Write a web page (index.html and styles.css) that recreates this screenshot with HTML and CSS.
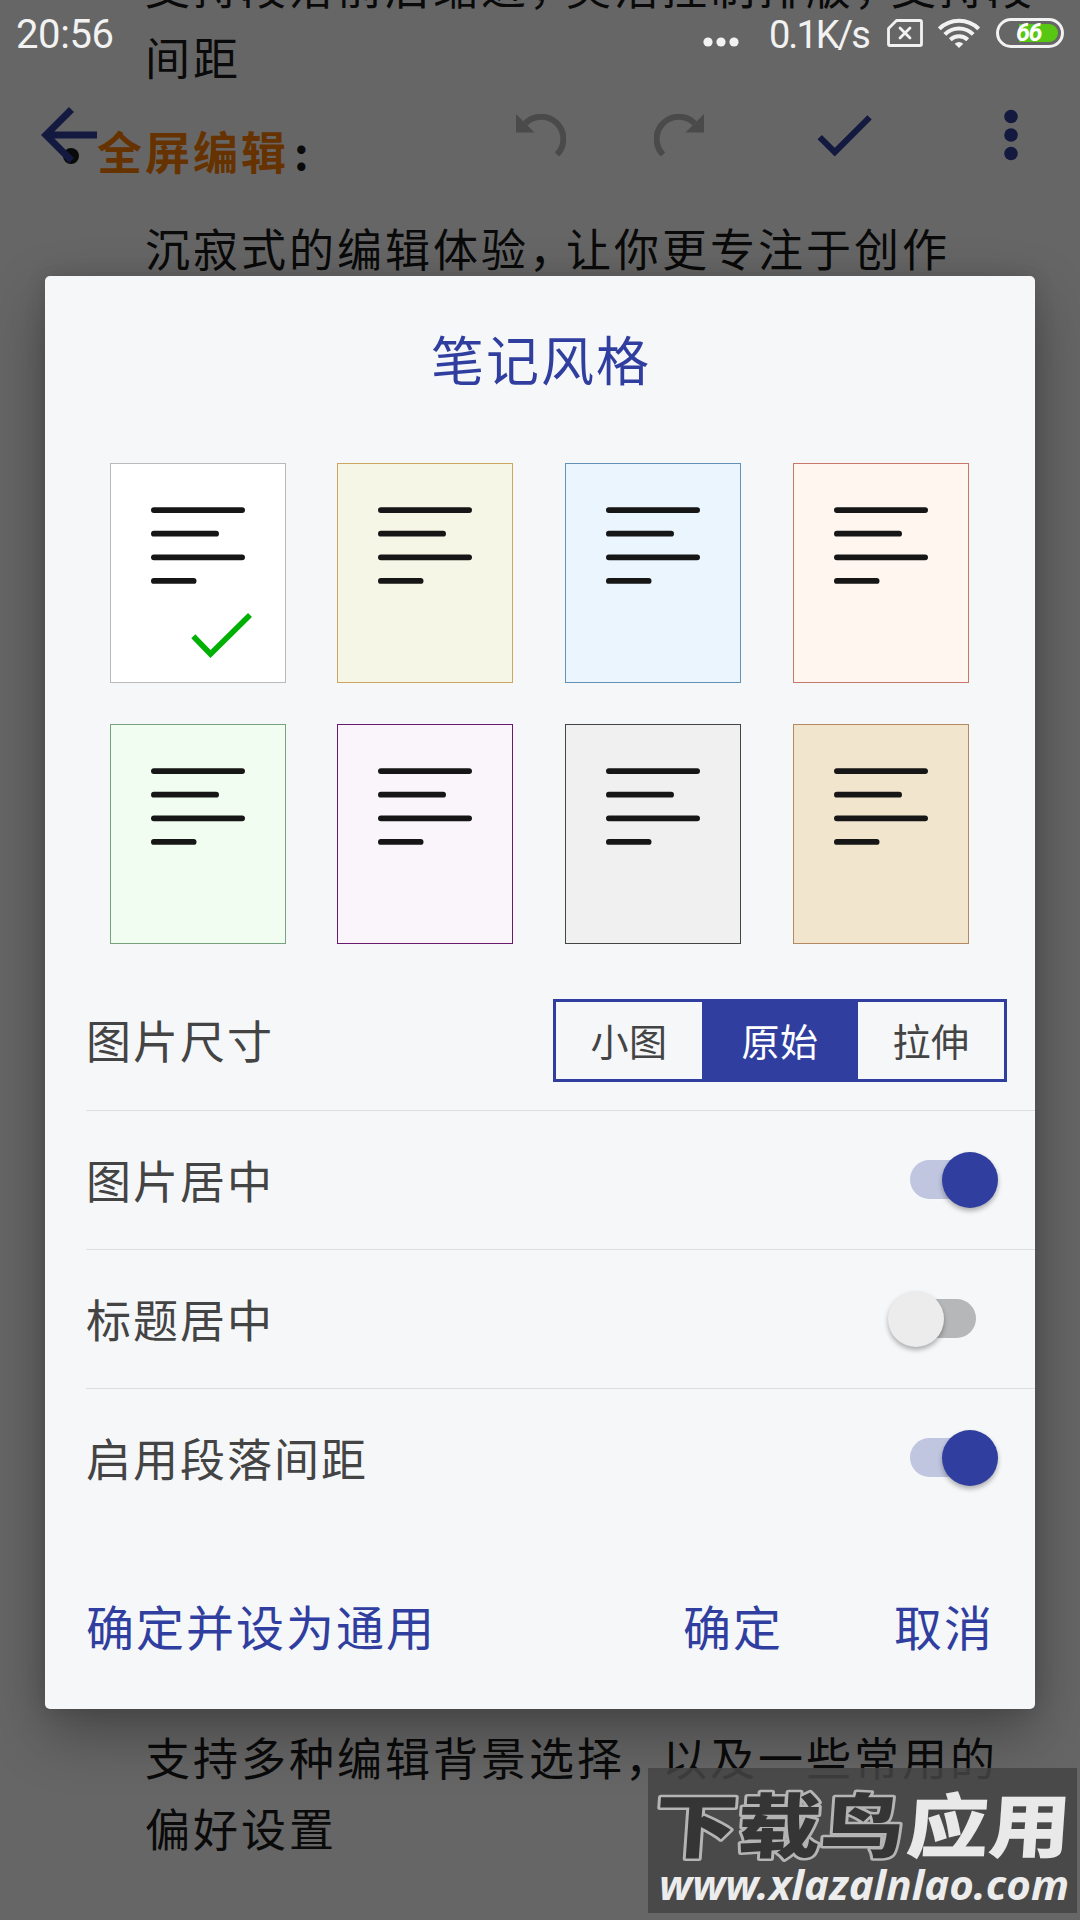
FILE: index.html
```html
<!DOCTYPE html>
<html lang="zh-CN">
<head>
    <meta charset="UTF-8">
    <meta name="viewport" content="width=device-width, initial-scale=1.0">
    <title>笔记风格</title>
    <link rel="stylesheet" href="styles.css">
</head>
<body>
    <svg class="defs" width="0" height="0">
        <symbol id="lines" viewBox="0 0 94 78">
            <g fill="#161616">
                <rect x="0" y="0.2" width="94" height="5.8" rx="2.9"/>
                <rect x="0" y="23.8" width="68" height="5.8" rx="2.9"/>
                <rect x="0" y="47.4" width="94" height="5.8" rx="2.9"/>
                <rect x="0" y="71" width="45.5" height="5.8" rx="2.9"/>
            </g>
        </symbol>
    </svg>

    <div class="screen">
        <!-- Note content -->
        <main class="note">
            <p>支持段落前后缩进<span class="comma">，</span>灵活控制排版<span class="comma">，</span>支持段<br>间距</p>
            <h2><span class="bullet"></span><span class="accent">全屏编辑</span><span class="colon">:</span></h2>
            <p>沉寂式的编辑体验<span class="comma">，</span>让你更专注于创作</p>
            <p class="last">支持多种编辑背景选择<span class="comma">，</span>以及一些常用的<br>偏好设置</p>
        </main>

        <header class="toolbar">
            <svg class="back" width="84" height="84" viewBox="0 0 24 24"><path fill="#303f9f" d="M20 11H7.83l5.59-5.59L12 4l-8 8 8 8 1.41-1.41L7.83 13H20v-2z"/></svg>
            <svg class="undo" width="50" height="43" viewBox="0 0 50 43"><path d="M9.4 9.4A22 22 0 0 1 41 40.5" fill="none" stroke="#b9b9b9" stroke-width="6"/><path d="M0 0v18.5h18.5z" fill="#b9b9b9"/></svg>
            <svg class="redo" width="50" height="43" viewBox="0 0 50 43"><path d="M40.6 9.4A22 22 0 0 0 9 40.5" fill="none" stroke="#b9b9b9" stroke-width="6"/><path d="M50 0v18.5H31.5z" fill="#b9b9b9"/></svg>
            <svg class="done" width="74" height="74" viewBox="0 0 24 24"><path fill="#303f9f" d="M9 16.17L4.83 12l-1.42 1.41L9 19 21 7l-1.41-1.41z"/></svg>
            <svg class="more" width="14" height="52" viewBox="0 0 14 52"><g fill="#303f9f"><circle cx="7" cy="7.5" r="6.8"/><circle cx="7" cy="26" r="6.8"/><circle cx="7" cy="44.5" r="6.8"/></g></svg>
        </header>

        <div class="scrim"></div>

        <div class="statusbar">
            <span class="time">20:56</span>
            <svg class="dots" width="36" height="30" viewBox="0 0 36 30"><g fill="#f2f2f2"><circle cx="5" cy="24" r="4.6"/><circle cx="18" cy="24" r="4.6"/><circle cx="31" cy="24" r="4.6"/></g></svg>
            <span class="speed">0.1K/s</span>
            <svg class="sim" width="36" height="30" viewBox="0 0 36 30"><path d="M9.5 2.5H33q1.500 0 1.500 1.500v22q0 1.500-1.500 1.500H3q-1.500 0-1.500-1.500V10.500z" fill="none" stroke="#f2f2f2" stroke-width="2.8" stroke-linejoin="round"/><path d="M13 10l10 10M23 10l-10 10" stroke="#f2f2f2" stroke-width="2.8" stroke-linecap="round"/></svg>
            <svg class="wifi" width="42" height="30" viewBox="0 0 42 30"><g fill="none" stroke="#f2f2f2" stroke-width="4"><path d="M1.3 10.8a28 28 0 0 1 39.4 0"/><path d="M6.800 16.400a20 20 0 0 1 28.400 0"/><path d="M12.300 21.800a12.500 12.500 0 0 1 17.400 0"/></g><path d="M21 30l-4.300-4.200q4.300-3.400 8.600 0z" fill="#f2f2f2"/></svg>
            <div class="battery"><div class="level"></div><b>66</b></div>
        </div>

        <!-- Style dialog -->
        <section class="dialog">
            <h1>笔记风格</h1>

            <div class="papers">
                <div class="paper white">
                    <svg width="94" height="78"><use href="#lines"/></svg>
                    <svg class="tick" width="62" height="46" viewBox="0 0 62 46"><path d="M2.300 23.300L19.500 41 59 2" fill="none" stroke="#00b104" stroke-width="5.600"/></svg>
                </div>
                <div class="paper yellow"><svg width="94" height="78"><use href="#lines"/></svg></div>
                <div class="paper blue"><svg width="94" height="78"><use href="#lines"/></svg></div>
                <div class="paper pink"><svg width="94" height="78"><use href="#lines"/></svg></div>
                <div class="paper green"><svg width="94" height="78"><use href="#lines"/></svg></div>
                <div class="paper purple"><svg width="94" height="78"><use href="#lines"/></svg></div>
                <div class="paper gray"><svg width="94" height="78"><use href="#lines"/></svg></div>
                <div class="paper kraft"><svg width="94" height="78"><use href="#lines"/></svg></div>
            </div>

            <div class="settings">
                <div class="row">
                    <span>图片尺寸</span>
                    <div class="segmented">
                        <button>小图</button>
                        <button class="active">原始</button>
                        <button>拉伸</button>
                    </div>
                </div>
                <div class="row">
                    <span>图片居中</span>
                    <div class="switch on"></div>
                </div>
                <div class="row">
                    <span>标题居中</span>
                    <div class="switch"></div>
                </div>
                <div class="row">
                    <span>启用段落间距</span>
                    <div class="switch on"></div>
                </div>
            </div>

            <footer class="actions">
                <button class="default">确定并设为通用</button>
                <button>确定</button>
                <button>取消</button>
            </footer>
        </section>

        <div class="watermark">
            <svg width="429" height="145" viewBox="0 0 429 145">
                <g transform="skewX(-4)">
                    <text class="wm-dark" x="11" y="84" textLength="249" lengthAdjust="spacingAndGlyphs">下载鸟</text>
                    <text class="wm-light" x="263" y="84" textLength="164" lengthAdjust="spacingAndGlyphs">应用</text>
                </g>
                <text class="wm-url" x="11" y="132" textLength="410" lengthAdjust="spacingAndGlyphs">www.xlazalnlao.com</text>
            </svg>
        </div>
    </div>
</body>
</html>
```
FILE: styles.css
```css
* {
    box-sizing: border-box;
}
body {
    margin: 0;
    font-family: "Noto Sans CJK SC", sans-serif;
}
.defs {
    position: absolute;
}
.screen {
    position: relative;
    width: 1080px;
    height: 1920px;
    overflow: hidden;
    background: #fff;
}

/* note */
.note {
    height: 1920px;
    padding-left: 145px;
    margin-top: -50px;
    font-size: 45px;
    letter-spacing: 3px;
    line-height: 71px;
    color: #1a1a1a;
    white-space: nowrap;
}
.note p {
    margin: 0;
}
.note h2 {
    display: flex;
    align-items: center;
    margin: 23px 0 26px -82px;
    font-size: 45px;
    line-height: 71px;
}
.note .last {
    margin-top: 1438px;
}
.comma {
    letter-spacing: -8px;
}
.bullet {
    width: 16px;
    height: 16px;
    margin: 10px 18px 0 0;
    border-radius: 50%;
    background: #1a1a1a;
}
.accent {
    color: #ff8000;
}
.colon {
    margin-left: 5px;
}

/* toolbar */
.toolbar {
    position: absolute;
    top: 85px;
    left: 0;
    width: 1080px;
    height: 100px;
    display: flex;
    align-items: center;
    padding-left: 27px;
}
.undo {
    margin-left: 405px;
}
.redo {
    margin-left: 88px;
}
.done {
    margin-left: 103px;
}
.more {
    margin-left: 123px;
}

.scrim {
    position: absolute;
    inset: 0;
    background: rgba(0, 0, 0, 0.6);
}

/* status bar */
.statusbar {
    position: absolute;
    top: 0;
    left: 0;
    width: 1080px;
    height: 66px;
    display: flex;
    align-items: center;
    padding: 0 16px;
    font-family: Roboto, sans-serif;
    font-size: 38px;
    color: #f2f2f2;
}
.time {
    width: 687px;
    margin-top: 3px;
    font-size: 40px;
    letter-spacing: -0.4px;
}
.speed {
    width: 114px;
    margin: 3px 0 0 30px;
    letter-spacing: -2px;
}
.sim {
    margin-left: 4px;
}
.wifi {
    margin-left: 15px;
}
.battery {
    position: relative;
    width: 68px;
    height: 30px;
    margin-left: 16px;
    border: 3px solid #f2f2f2;
    border-radius: 16px;
}
.battery .level {
    width: 39px;
    height: 18px;
    margin: 3px 0 0 20px;
    border-radius: 0 9px 9px 0;
    background: #57c714;
}
.battery b {
    position: absolute;
    top: -2px;
    left: 17px;
    font-size: 25px;
    line-height: 28px;
    font-style: italic;
    letter-spacing: -1.5px;
    color: #fff;
}

/* dialog */
.dialog {
    position: absolute;
    top: 276px;
    left: 45px;
    width: 990px;
    height: 1433px;
    border-radius: 5px;
    background: #f6f7f9;
    box-shadow: 0 24px 60px rgba(0, 0, 0, 0.32), 0 0 20px rgba(0, 0, 0, 0.12);
}
.dialog h1 {
    margin: 0;
    height: 187px;
    padding: 42px 0 0 2px;
    font-size: 53px;
    font-weight: 400;
    line-height: 80px;
    letter-spacing: 2px;
    text-align: center;
    color: #303f9f;
}
.papers {
    display: grid;
    grid-template-columns: 227px 228px 228px 176px;
    row-gap: 41px;
    margin-left: 65px;
}
.paper {
    position: relative;
    width: 176px;
    height: 220px;
    padding: 43px 0 0 40px;
    border: 1px solid;
}
.paper svg {
    display: block;
}
.paper .tick {
    position: absolute;
    top: 149px;
    left: 80px;
}
.white {
    background: #fff;
    border-color: #bababa;
}
.yellow {
    background: #f6f6e6;
    border-color: #cda75f;
}
.blue {
    background: #eaf5fd;
    border-color: #6492b7;
}
.pink {
    background: #fff6f0;
    border-color: #c7786b;
}
.green {
    background: #f1fdf1;
    border-color: #76a27e;
}
.purple {
    background: #faf5fb;
    border-color: #6a1a6e;
}
.gray {
    background: #f0f0f0;
    border-color: #444;
}
.kraft {
    background: #f1e5ce;
    border-color: #b58a62;
}

.settings {
    margin: 27px 0 0 41px;
}
.row {
    display: flex;
    align-items: center;
    justify-content: space-between;
    height: 139px;
    font-size: 45px;
    letter-spacing: 2px;
    color: #444;
}
.row + .row {
    border-top: 1px solid #dcdee0;
}
.row span {
    margin-top: -2px;
}
button {
    padding: 0;
    border: none;
    background: none;
    font-family: inherit;
    cursor: pointer;
}
.segmented {
    display: flex;
    width: 454px;
    height: 83px;
    margin-right: 28px;
    border: 3px solid #303f9f;
}
.segmented button {
    flex: 0 0 146px;
    padding-bottom: 2px;
    font-size: 38px;
    letter-spacing: 0.5px;
    color: #444;
}
.segmented .active {
    flex: 1;
    background: #303f9f;
    color: #fff;
}
.switch {
    position: relative;
    width: 66px;
    height: 39px;
    margin: 0 59px 2px 0;
    border-radius: 20px;
    background: #b5b7b9;
}
.switch::after {
    content: "";
    position: absolute;
    top: -8px;
    left: -22px;
    width: 56px;
    height: 56px;
    border-radius: 50%;
    background: #ececec;
    box-shadow: 0 3px 5px rgba(0, 0, 0, 0.3);
}
.switch.on {
    background: #c0c6e0;
}
.switch.on::after {
    left: 32px;
    background: #303f9f;
}

.actions {
    display: flex;
    margin: 62px 41px 0 41px;
}
.actions button {
    margin-left: 111px;
    font-size: 48px;
    line-height: 72px;
    letter-spacing: 2px;
    color: #303f9f;
}
.actions .default {
    margin: 0 auto 0 0;
}

/* watermark */
.watermark {
    position: absolute;
    top: 1768px;
    left: 648px;
    width: 429px;
    height: 145px;
    background: rgba(68, 68, 68, 0.85);
}
.watermark text {
    font-size: 70px;
    font-weight: 900;
}
.watermark .wm-dark {
    fill: #353535;
    stroke: #b4b4b4;
    stroke-width: 5px;
    stroke-linejoin: round;
    paint-order: stroke;
}
.watermark .wm-light {
    fill: #e9e9e9;
}
.watermark .wm-url {
    font-family: "Noto Sans", "Open Sans", sans-serif;
    font-size: 42px;
    font-weight: 700;
    font-style: italic;
    fill: #ececec;
}
```
